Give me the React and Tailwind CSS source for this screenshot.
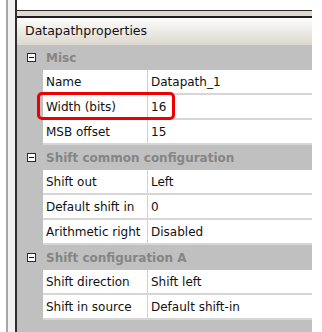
const sections = [
  {
    title: "Misc",
    rows: [
      ["Name", "Datapath_1"],
      ["Width (bits)", "16"],
      ["MSB offset", "15"],
    ],
  },
  {
    title: "Shift common configuration",
    rows: [
      ["Shift out", "Left"],
      ["Default shift in", "0"],
      ["Arithmetic right", "Disabled"],
    ],
  },
  {
    title: "Shift configuration A",
    rows: [
      ["Shift direction", "Shift left"],
      ["Shift in source", "Default shift-in"],
    ],
  },
];

function MinusBox() {
  return (
    <div className="flex h-[9px] w-[9px] items-center justify-center border border-[#2a2a2a] bg-white">
      <div className="h-px w-[5px] bg-[#111]" />
    </div>
  );
}

function SectionRow({ title }) {
  return (
    <div className="flex h-[25px] items-center bg-[#c0c0c0]">
      <div className="flex w-[26px] justify-center pl-[2px]">
        <MinusBox />
      </div>
      <span className="pl-[3px] text-[12px] font-bold text-[#858585]">{title}</span>
    </div>
  );
}

function PropRow({ name, value }) {
  return (
    <div className="flex h-[25px] bg-[#c0c0c0]">
      <div className="w-[26px]" />
      <div className="flex flex-1 border-b-2 border-[#d6d6d6] bg-white">
        <div className="flex w-[105px] items-center border-r border-[#d0d0d0] pl-[3px] text-[#111]">
          {name}
        </div>
        <div className="flex flex-1 items-center pl-[3px] text-[#111]">{value}</div>
      </div>
    </div>
  );
}

export default function App() {
  return (
    <div
      className="relative flex h-[332px] w-[322px] overflow-hidden bg-white text-[12px]"
      style={{ fontFamily: '"DejaVu Sans", sans-serif' }}
    >
      <div className="w-[6px] bg-white" />
      <div className="w-[2px] bg-[#a8a8a8]" />
      <div className="w-[7px] bg-[#f2f2f2]" />
      <div className="w-[2px] bg-[#2e2e2e]" />

      <div className="flex w-[295px] flex-col">
        <div className="h-[10px] bg-white" />
        <div className="h-px bg-[#2a2a2a]" />
        <div className="h-[5px] bg-[#dedad3]" />
        <div className="h-[2px] bg-[#1e1e1e]" />
        <div className="flex h-[27px] items-center bg-linear-to-b from-[#fdfdfd] to-[#dcd8cf] pl-[8px] text-[12.5px] text-[#111]">
          Datapathproperties
        </div>
        {sections.map((s) => (
          <div key={s.title}>
            <SectionRow title={s.title} />
            {s.rows.map(([n, v]) => (
              <PropRow key={n} name={n} value={v} />
            ))}
          </div>
        ))}
        <div className="flex-1 bg-[#c0c0c0]" />
      </div>

      <div className="flex-1 bg-white" />

      <div className="absolute left-[37px] top-[92px] h-[28px] w-[138px] rounded-[5px] border-[3px] border-[#ee0000]" />
    </div>
  );
}
